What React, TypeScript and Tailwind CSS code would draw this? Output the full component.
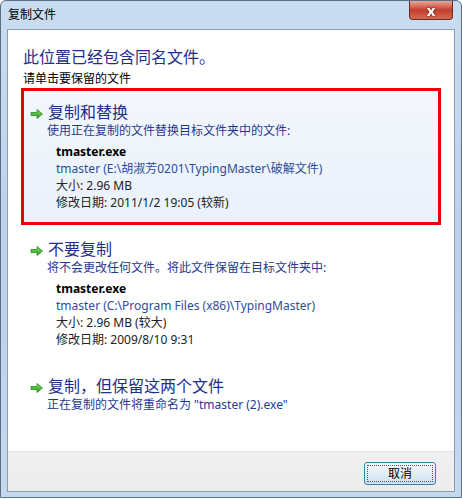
const font = { fontFamily: '"Noto Sans", "Noto Sans CJK SC", sans-serif' };

function GreenArrow() {
    return (
        <svg width="14" height="12" viewBox="0 0 14 12" className="shrink-0">
            <defs>
                <linearGradient id="ga" x1="0" y1="0" x2="0" y2="1">
                    <stop offset="0" stopColor="#8ee267" />
                    <stop offset="1" stopColor="#1f9a1a" />
                </linearGradient>
            </defs>
            <path d="M1 4.5h6V1.5L12.5 6 7 10.5V7.5H1z" fill="url(#ga)" stroke="#2b8a22" strokeWidth="0.8" strokeLinejoin="round" />
        </svg>
    );
}

interface FileInfo {
    name: string;
    path: string;
    size: string;
    date: string;
}

interface OptionProps {
    title: string;
    desc: string;
    file?: FileInfo;
    selected?: boolean;
}

function Option({ title, desc, file, selected }: OptionProps) {
    return (
        <div
            className={`flex flex-col pl-[6px] pr-2 pt-[10px] pb-[11px] border-[3px] ${selected
                ? 'border-[#ee0000] bg-gradient-to-b from-[#f3f7fc] to-[#e9f1fa]'
                : 'border-transparent'
                }`}
        >
            <div className="flex items-center gap-[4px]">
                <div className="mt-[4px]"><GreenArrow /></div>
                <span className="text-[16px] leading-[22px] text-[#1c2f8c]">{title}</span>
            </div>
            <div className="pl-[17px] text-[12px] leading-[16px] text-[#1e3a8f]">{desc}</div>
            {file && (
                <div className="pl-[26px] pt-[4px] flex flex-col text-[12px] leading-[17px]">
                    <span className="font-bold text-black">{file.name}</span>
                    <span className="text-[#2d4d9a]">{file.path}</span>
                    <span className="text-[#222]">{file.size}</span>
                    <span className="text-[#222]">{file.date}</span>
                </div>
            )}
        </div>
    );
}

export default function App() {
    return (
        <div className="w-[462px] h-[500px] bg-white" style={font}>
            <div className="w-[462px] h-[498px] flex flex-col rounded-t-[6px] border border-[#5a6f8a] bg-gradient-to-b from-[#c9dcf0] via-[#bcd2ea] to-[#c4d8ee] px-[6px] pb-[5px]">
                <div className="h-[28px] flex items-center justify-between">
                    <span className="text-[12px] text-black pl-[1px]">复制文件</span>
                    <div className="self-start w-[44px] h-[19px] mr-[2px] rounded-b-[4px] border border-t-0 border-[#6e2a22] bg-gradient-to-b from-[#eaa595] via-[#c43c2c] to-[#d66a52] flex items-center justify-center">
                        <span className="text-white font-bold text-[15px] leading-none drop-shadow-[0_0_1px_#4a1008]">x</span>
                    </div>
                </div>
                <div className="flex-1 flex flex-col border border-[#8b9bb0] bg-white">
                    <div className="flex-1 flex flex-col px-[13px] pt-[16px]">
                        <div className="text-[16px] leading-[22px] text-[#1c2f8c] pl-[2px]">此位置已经包含同名文件。</div>
                        <div className="text-[12px] leading-[16px] text-black pl-[2px] mt-[3px] mb-[1px]">请单击要保留的文件</div>
                        <Option
                            title="复制和替换"
                            desc="使用正在复制的文件替换目标文件夹中的文件:"
                            selected
                            file={{
                                name: 'tmaster.exe',
                                path: 'tmaster (E:\\胡淑芳0201\\TypingMaster\\破解文件)',
                                size: '大小: 2.96 MB',
                                date: '修改日期: 2011/1/2 19:05 (较新)',
                            }}
                        />
                        <Option
                            title="不要复制"
                            desc="将不会更改任何文件。将此文件保留在目标文件夹中:"
                            file={{
                                name: 'tmaster.exe',
                                path: 'tmaster (C:\\Program Files (x86)\\TypingMaster)',
                                size: '大小: 2.96 MB (较大)',
                                date: '修改日期: 2009/8/10 9:31',
                            }}
                        />
                        <Option
                            title="复制，但保留这两个文件"
                            desc={'正在复制的文件将重命名为 "tmaster (2).exe"'}
                        />
                    </div>
                    <div className="h-[40px] shrink-0 flex items-start justify-end pt-[10px] pr-[18px] bg-gradient-to-b from-[#f0f0f0] to-[#ececec] border-t border-[#dfdfdf]">
                        <button className="w-[72px] h-[23px] rounded-[3px] border border-[#3c7fb1] bg-gradient-to-b from-[#f2f8fc] via-[#e3eff8] to-[#c9e0f1] outline outline-1 outline-dotted outline-offset-[-4px] outline-[#555] text-[12px] text-black">
                            取消
                        </button>
                    </div>
                </div>
            </div>
        </div>
    );
}
